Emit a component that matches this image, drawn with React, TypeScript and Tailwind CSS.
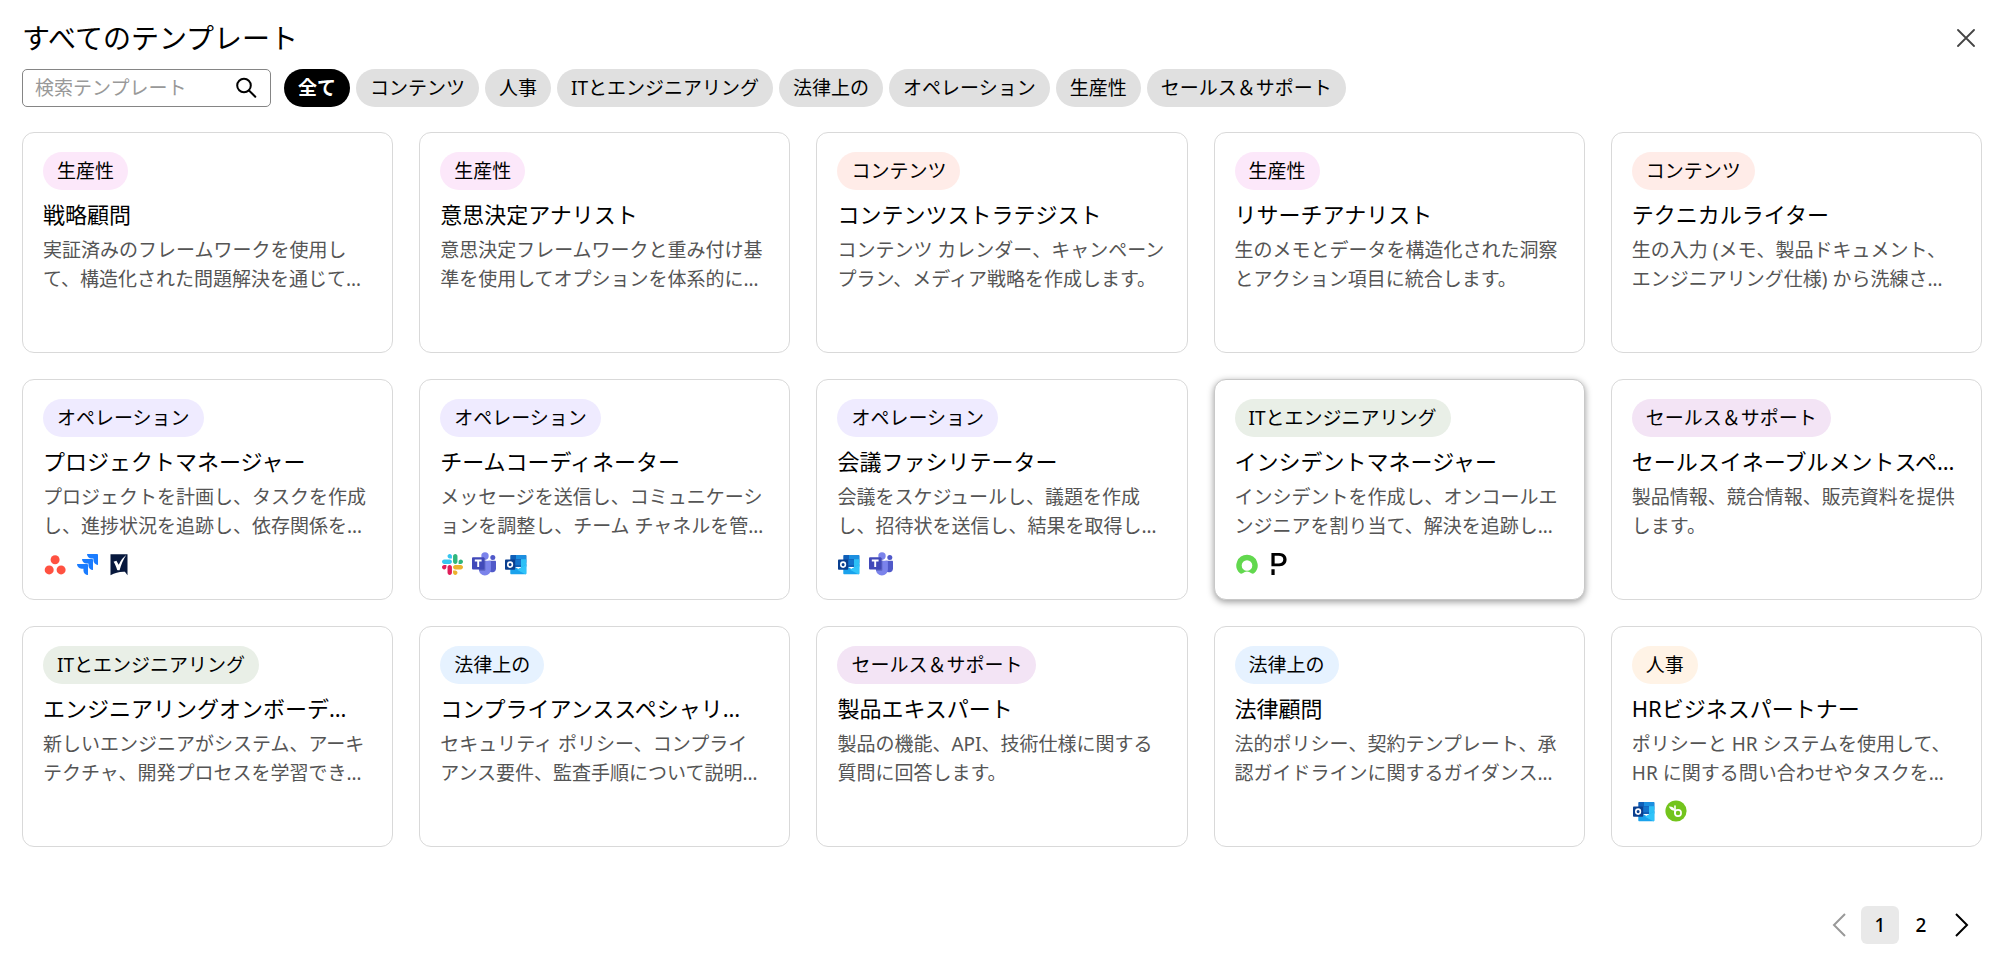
import { useState } from "react";
import { SiJira, SiPagerduty } from "react-icons/si";

type Category = "content" | "hr" | "it" | "legal" | "operations" | "productivity" | "sales";
type AppName = "asana" | "jira" | "smartsheet" | "slack" | "teams" | "outlook" | "servicenow" | "pagerduty" | "bamboohr";

interface Template {
    category: Category;
    title: string;
    description: string;
    apps?: AppName[];
    raised?: boolean;
}

const categoryLabels: Record<Category, string> = {
    content: "コンテンツ",
    hr: "人事",
    it: "ITとエンジニアリング",
    legal: "法律上の",
    operations: "オペレーション",
    productivity: "生産性",
    sales: "セールス＆サポート",
};

const categoryColors: Record<Category, string> = {
    content: "bg-[#ffece8]",
    hr: "bg-[#fff3e6]",
    it: "bg-[#e9efe7]",
    legal: "bg-[#e6f2ff]",
    operations: "bg-[#efebff]",
    productivity: "bg-[#fce8fa]",
    sales: "bg-[#f3e4f5]",
};

const filters: Category[] = ["content", "hr", "it", "legal", "operations", "productivity", "sales"];

const templates: Template[] = [
    { category: "productivity", title: "戦略顧問", description: "実証済みのフレームワークを使用して、構造化された問題解決を通じて…" },
    { category: "productivity", title: "意思決定アナリスト", description: "意思決定フレームワークと重み付け基準を使用してオプションを体系的に…" },
    { category: "content", title: "コンテンツストラテジスト", description: "コンテンツ カレンダー、キャンペーン プラン、メディア戦略を作成します。" },
    { category: "productivity", title: "リサーチアナリスト", description: "生のメモとデータを構造化された洞察とアクション項目に統合します。" },
    { category: "content", title: "テクニカルライター", description: "生の入力 (メモ、製品ドキュメント、エンジニアリング仕様) から洗練さ…" },
    { category: "operations", title: "プロジェクトマネージャー", description: "プロジェクトを計画し、タスクを作成し、進捗状況を追跡し、依存関係を…", apps: ["asana", "jira", "smartsheet"] },
    { category: "operations", title: "チームコーディネーター", description: "メッセージを送信し、コミュニケーションを調整し、チーム チャネルを管…", apps: ["slack", "teams", "outlook"] },
    { category: "operations", title: "会議ファシリテーター", description: "会議をスケジュールし、議題を作成し、招待状を送信し、結果を取得し…", apps: ["outlook", "teams"] },
    { category: "it", title: "インシデントマネージャー", description: "インシデントを作成し、オンコールエンジニアを割り当て、解決を追跡し…", apps: ["servicenow", "pagerduty"], raised: true },
    { category: "sales", title: "セールスイネーブルメントスペ…", description: "製品情報、競合情報、販売資料を提供します。" },
    { category: "it", title: "エンジニアリングオンボーデ…", description: "新しいエンジニアがシステム、アーキテクチャ、開発プロセスを学習でき…" },
    { category: "legal", title: "コンプライアンススペシャリ…", description: "セキュリティ ポリシー、コンプライ\nアンス要件、監査手順について説明…" },
    { category: "sales", title: "製品エキスパート", description: "製品の機能、API、技術仕様に関する質問に回答します。" },
    { category: "legal", title: "法律顧問", description: "法的ポリシー、契約テンプレート、承認ガイドラインに関するガイダンス…" },
    { category: "hr", title: "HRビジネスパートナー", description: "ポリシーと HR システムを使用して、HR に関する問い合わせやタスクを…", apps: ["outlook", "bamboohr"] },
];

function AppIcon({ name }: { name: AppName }) {
    switch (name) {
        case "asana":
            return (
                <svg viewBox="0 0 24 24" className="size-6" fill="#ff5141">
                    <circle cx="12.1" cy="7.8" r="4.5" />
                    <circle cx="6.2" cy="17.9" r="4.5" />
                    <circle cx="18.1" cy="17.9" r="4.5" />
                </svg>
            );
        case "jira":
            return <SiJira className="size-[21px] text-[#1a7cff]" />;
        case "smartsheet":
            return (
                <svg viewBox="0 0 24 24" className="size-6">
                    <path d="M3.500 2.300h17v20.900l-2.600-3.400c-5.200-.3-9.800.9-14.400 3.400z" fill="#07183d" />
                    <path d="M6.600 9.800l2.800-1 2.300 4c2-4.400 4.500-7.500 7.500-9.800-2.900 4.500-5.200 9.700-6.600 15.200-1 .2-1.800.1-2.400-.3-1.100-3.200-2.100-5.600-3.600-8.100z" fill="#fff" />
                </svg>
            );
        case "slack":
            return (
                <svg viewBox="0 0 122.8 122.8" className="size-[21px]">
                    <path fill="#e01e5a" d="M25.8 77.6c0 7.1-5.8 12.9-12.9 12.9S0 84.7 0 77.6s5.8-12.9 12.9-12.9h12.9v12.9zm6.5 0c0-7.1 5.8-12.9 12.9-12.9s12.9 5.8 12.9 12.9v32.3c0 7.1-5.8 12.9-12.9 12.9s-12.9-5.8-12.9-12.9V77.6z" />
                    <path fill="#36c5f0" d="M45.2 25.8c-7.1 0-12.9-5.8-12.9-12.9S38.1 0 45.2 0s12.9 5.8 12.9 12.9v12.9H45.2zm0 6.5c7.1 0 12.9 5.8 12.9 12.9s-5.8 12.9-12.9 12.9H12.9C5.8 58.1 0 52.3 0 45.2s5.8-12.9 12.9-12.9h32.3z" />
                    <path fill="#2eb67d" d="M97 45.2c0-7.1 5.8-12.9 12.9-12.9s12.9 5.8 12.9 12.9-5.8 12.9-12.9 12.9H97V45.2zm-6.5 0c0 7.1-5.8 12.9-12.9 12.9s-12.9-5.8-12.9-12.9V12.9C64.7 5.8 70.5 0 77.6 0s12.9 5.8 12.9 12.9v32.3z" />
                    <path fill="#ecb22e" d="M77.6 97c7.1 0 12.9 5.8 12.9 12.9s-5.8 12.9-12.9 12.9-12.9-5.8-12.9-12.9V97h12.9zm0-6.5c-7.1 0-12.9-5.8-12.9-12.9s5.8-12.9 12.9-12.9h32.3c7.1 0 12.9 5.8 12.9 12.9s-5.8 12.9-12.9 12.9H77.6z" />
                </svg>
            );
        case "teams":
            return (
                <svg viewBox="0 0 24 24" className="size-6">
                    <circle cx="20.8" cy="5.5" r="2.5" fill="#5059c9" />
                    <path d="M16.500 8.800h6.500c.6 0 1 .5 1 1.100v6.500a4 4 0 0 1-7.400 2z" fill="#5059c9" />
                    <circle cx="13" cy="4" r="3.700" fill="#7b83eb" />
                    <path d="M8.300 8.800h9.600c.6 0 1 .5 1 1v7.600a6 6 0 0 1-12 0v-7.600c0-.6.7-1 1.400-1z" fill="#7b83eb" />
                    <path d="M8.500 6.200h3.900c.6 0 1 .5 1 1v10.600c0 .6-.5 1-1 1H7.100a6 6 0 0 1-.2-1.800z" fill="#4a50a8" opacity=".6" />
                    <rect x="0" y="5.200" width="12.400" height="12.400" rx="1" fill="#4149b9" />
                    <path d="M2.800 8.500h6.800M6.200 8.500v6.600" stroke="#fff" strokeWidth="1.900" fill="none" />
                </svg>
            );
        case "outlook":
            return (
                <svg viewBox="0 0 24 24" className="size-6">
                    <rect x="6.300" y="3" width="16" height="12" rx=".8" fill="#0f5fb8" />
                    <path d="M12 3h9.500c.5 0 .8.300.8.800v7H17V7.300h-5z" fill="#1c8fe0" />
                    <path d="M17 7.300h5.300v6L17 16z" fill="#2cc0f6" />
                    <rect x="11" y="8" width="6" height="5" fill="#1473cc" />
                    <path d="M6.300 12.500l8.200 4.500 7.800-4.500v8.700c0 .6-.4 1-1 1h-14c-.6 0-1-.4-1-1z" fill="#1aa2ec" />
                    <path d="M22.300 12.500v8.700c0 .6-.4 1-1 1L13 17.800z" fill="#30c4fa" />
                    <rect x="1" y="7.500" width="10.200" height="10.200" rx=".8" fill="#0a3f8f" />
                    <ellipse cx="6.100" cy="12.600" rx="2.300" ry="2.500" fill="none" stroke="#fff" strokeWidth="1.600" />
                </svg>
            );
        case "servicenow":
            return (
                <svg viewBox="0 0 24 24" className="size-6" fill="#62d84e">
                    <path fillRule="evenodd" d="M12 2.800a10.600 10.600 0 0 0-7.300 18.300c.8.800 2 .9 2.900.2a7.200 7.200 0 0 1 8.800 0c.9.700 2.100.6 2.900-.2A10.600 10.600 0 0 0 12 2.800zm0 5.400a5.300 5.300 0 1 1 0 10.600 5.300 5.300 0 0 1 0-10.600z" />
                </svg>
            );
        case "pagerduty":
            return <SiPagerduty className="size-[22px] text-black" />;
        case "bamboohr":
            return (
                <svg viewBox="0 0 24 24" className="size-6">
                    <circle cx="12" cy="12" r="10.600" fill="#73c41d" />
                    <path d="M4.800 7.400c3.500-.2 5.600 1 6.400 4.400-3.200-.1-5.200-1.600-6.400-4.400z" fill="#fff" />
                    <path d="M11 7v7" stroke="#fff" strokeWidth="1.600" strokeLinecap="round" />
                    <circle cx="14" cy="14" r="3.100" fill="none" stroke="#fff" strokeWidth="1.700" />
                </svg>
            );
    }
}

function TemplateCard({ template }: { template: Template }) {
    return (
        <article
            className={`min-h-[221px] rounded-xl border bg-white px-5 py-[19px] ${
                template.raised ? "border-[#c8c8c8] shadow-[0_2px_7px_rgba(0,0,0,0.4)]" : "border-[#d9d9d9]"
            }`}
        >
            <span className={`inline-flex h-[38px] items-center rounded-full px-[14px] text-[19px] leading-7 ${categoryColors[template.category]}`}>
                {categoryLabels[template.category]}
            </span>
            <h2 className="mt-2.5 truncate text-[22px] leading-7">{template.title}</h2>
            <p className="mt-2 line-clamp-2 text-[19px] leading-[29px] whitespace-pre-line text-[#555]">{template.description}</p>
            {template.apps && (
                <div className="mt-[11px] flex gap-2">
                    {template.apps.map((app) => (
                        <span key={app} className="flex size-6 items-center justify-center">
                            <AppIcon name={app} />
                        </span>
                    ))}
                </div>
            )}
        </article>
    );
}

export default function App() {
    const [searchTerm, setSearchTerm] = useState("");
    const [filter, setFilter] = useState<Category | "all">("all");
    const [page, setPage] = useState(1);

    const visible = templates.filter(
        (t) => (filter === "all" || t.category === filter) && t.title.includes(searchTerm)
    );

    const pillBase = "h-[38px] shrink-0 rounded-full px-[14px] text-[19px] leading-7";

    return (
        <main lang="ja" className="min-h-screen bg-white pt-[18px] pr-[18px] pb-5 pl-[22px] font-['Noto_Sans','Noto_Sans_CJK_JP',sans-serif] text-black">
            <header className="flex items-center justify-between">
                <h1 className="text-[28px] leading-10">すべてのテンプレート</h1>
                <button type="button" aria-label="閉じる" className="flex size-8 items-center justify-center">
                    <svg viewBox="0 0 18 18" className="size-[18px]" fill="none" stroke="#444" strokeWidth="1.800" strokeLinecap="round">
                        <path d="M1 1l16 16M17 1L1 17" />
                    </svg>
                </button>
            </header>

            {/* Search and category filters */}
            <div className="mt-[11px] flex items-center gap-[13px]">
                <label className="flex h-[38px] w-[249px] shrink-0 items-center rounded-[5px] border border-[#858585] px-3">
                    <input
                        type="text"
                        aria-label="検索テンプレート"
                        placeholder="検索テンプレート"
                        className="min-w-0 flex-1 text-[19px] leading-7 outline-none placeholder:text-[#999]"
                        value={searchTerm}
                        onChange={(e) => setSearchTerm(e.target.value)}
                    />
                    <svg viewBox="0 0 22 22" className="size-[22px] shrink-0" fill="none" stroke="#000" strokeWidth="2" strokeLinecap="round">
                        <circle cx="8" cy="8.500" r="6.800" />
                        <path d="M13 13.500l6.300 6.300" />
                    </svg>
                </label>
                <div className="flex flex-wrap gap-1.5">
                    <button
                        type="button"
                        onClick={() => setFilter("all")}
                        className={`${pillBase} ${filter === "all" ? "bg-black font-bold text-white" : "bg-[#e0e0e0]"}`}
                    >
                        全て
                    </button>
                    {filters.map((item) => (
                        <button
                            key={item}
                            type="button"
                            onClick={() => setFilter(item)}
                            className={`${pillBase} ${filter === item ? "bg-black font-bold text-white" : "bg-[#e0e0e0]"}`}
                        >
                            {categoryLabels[item]}
                        </button>
                    ))}
                </div>
            </div>

            {/* Templates */}
            <section className="mt-[25px] grid grid-cols-5 gap-[26px]">
                {visible.map((template) => (
                    <TemplateCard key={template.title} template={template} />
                ))}
            </section>

            {/* Pagination */}
            <nav className="mt-[59px] flex justify-end gap-[3px] pr-px text-[19px] font-medium">
                <button type="button" aria-label="前へ" disabled={page === 1} onClick={() => setPage(1)} className="flex size-[38px] items-center justify-center text-black disabled:text-[#999]">
                    <svg viewBox="0 0 14 24" className="h-6 w-[14px]" fill="none" stroke="currentColor" strokeWidth="2">
                        <path d="M13 1L2 12l11 11" />
                    </svg>
                </button>
                {[1, 2].map((n) => (
                    <button key={n} type="button" onClick={() => setPage(n)} className={`size-[38px] rounded-md ${page === n ? "bg-[#e9e9e9]" : ""}`}>
                        {n}
                    </button>
                ))}
                <button type="button" aria-label="次へ" disabled={page === 2} onClick={() => setPage(2)} className="flex size-[38px] items-center justify-center text-black disabled:text-[#999]">
                    <svg viewBox="0 0 14 24" className="h-6 w-[14px]" fill="none" stroke="currentColor" strokeWidth="2">
                        <path d="M1 1l11 11L1 23" />
                    </svg>
                </button>
            </nav>
        </main>
    );
}
